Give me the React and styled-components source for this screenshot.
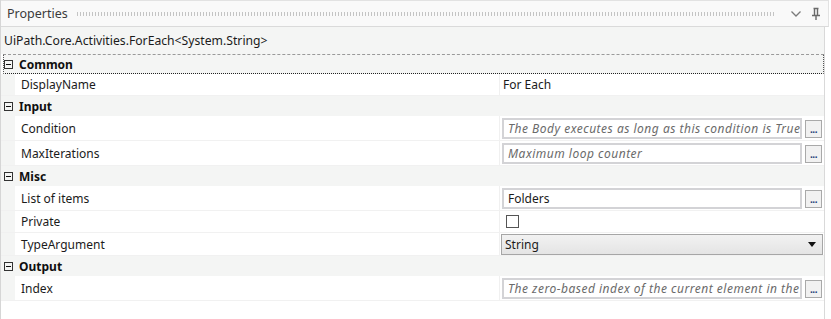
import React from 'react';
import styled, { createGlobalStyle } from 'styled-components';

const GlobalStyle = createGlobalStyle`
  html, body { margin: 0; padding: 0; background: #ffffff; }
  body { font-family: "Noto Sans", "Segoe UI", sans-serif; font-size: 12px; color: #1b1b1b; }
`;

const Panel = styled.div`
  width: 831px;
  height: 319px;
  display: flex;
  flex-direction: column;
  background: #ffffff;
  box-sizing: border-box;
  border-left: 1px solid #d6d6d6;
  overflow: hidden;
`;

const TitleBar = styled.div`
  height: 27px;
  display: flex;
  align-items: center;
  padding: 0 6px;
  gap: 8px;
  background: #f9f9f9;
  border-top: 1px solid #e2e2e2;
  border-bottom: 1px solid #dadada;
  border-right: 1px solid #e2e2e2;
  margin-right: 2px;
  box-sizing: border-box;
`;

const Title = styled.span`
  color: #3b3b3b;
  font-size: 12.5px;
`;

const Grip = styled.div`
  flex: 1;
  height: 4px;
  margin-right: 8px;
  background-image: radial-gradient(circle, #c4c4c4 0.7px, transparent 0.8px);
  background-size: 3px 2px;
`;

const TitleIcon = styled.svg`
  flex: none;
  display: block;
`;

const Body = styled.div`
  flex: 1;
  display: flex;
  flex-direction: column;
  margin-right: 6px;
  border-right: 1px solid #d9d9d9;
  background: #ffffff;
`;

const TypeName = styled.div`
  height: 27px;
  display: flex;
  align-items: center;
  padding-left: 3px;
  background: #f4f5f4;
  color: #1b1b1b;
  font-size: 12.2px;
`;

const CategoryRow = styled.div`
  height: 20px;
  display: flex;
  align-items: center;
  gap: 6px;
  padding-left: 3px;
  background: #f4f5f4;
  box-sizing: border-box;
  ${p => p.$focused && `
    border-top: 1px dashed #9a9a9a;
    border-bottom: 1px dotted #222;
    border-left: 1px dotted #555;
    border-right: 1px dotted #555;
    margin-left: 2px;
    padding-left: 0;
  `}
`;

const Toggle = styled.span`
  width: 9px;
  height: 9px;
  border: 1px solid #333;
  box-sizing: border-box;
  position: relative;
  flex: none;
  &::after {
    content: '';
    position: absolute;
    left: 1px;
    right: 1px;
    top: 3px;
    height: 1px;
    background: #111;
  }
`;

const CategoryName = styled.span`
  font-weight: 700;
  color: #0f0f0f;
`;

const PropRow = styled.div`
  height: ${p => p.$h}px;
  display: grid;
  grid-template-columns: 14px 485px minmax(0, 1fr);
  box-sizing: border-box;
  background: #ffffff;
  border-bottom: 1px solid #f1f1f1;
`;

const Gutter = styled.div`
  background: #f4f5f4;
`;

const Label = styled.div`
  display: flex;
  align-items: center;
  padding-left: 6px;
  color: #1b1b1b;
  border-right: 1px solid #f0f0f0;
`;

const ValueCell = styled.div`
  display: flex;
  align-items: center;
  gap: 3px;
  padding-left: 2px;
  padding-right: 2px;
  min-width: 0;
`;

const PlainValue = styled.span`
  padding-left: 1px;
`;

const TextBox = styled.div`
  flex: 1;
  min-width: 0;
  height: 21px;
  box-sizing: border-box;
  border: 2px solid #d3d3d6;
  display: flex;
  align-items: center;
  padding-left: 4px;
  white-space: nowrap;
  overflow: hidden;
  color: ${p => (p.$hint ? '#6a6a6a' : '#1b1b1b')};
  font-style: ${p => (p.$hint ? 'italic' : 'normal')};
  letter-spacing: ${p => (p.$hint ? '0.5px' : '0')};
  background: #ffffff;
`;

const DotsButton = styled.div`
  flex: none;
  width: 17px;
  height: 18px;
  box-sizing: border-box;
  border: 1px solid #a9a9a9;
  background: #f1f1f1;
  display: flex;
  align-items: flex-end;
  justify-content: center;
  padding-bottom: 3px;
  font-size: 10px;
  font-weight: 700;
  line-height: 1;
  color: #1f3e7a;
  letter-spacing: -0.5px;
  margin-top: 2px;
`;

const CheckBox = styled.span`
  width: 13px;
  height: 13px;
  box-sizing: border-box;
  border: 1px solid #555;
  background: #fff;
  margin-left: 4px;
`;

const Select = styled.div`
  flex: 1;
  height: 21px;
  box-sizing: border-box;
  border: 1px solid #a6a6a6;
  background: linear-gradient(#f2f2f2, #e4e4e4);
  display: flex;
  align-items: center;
  justify-content: space-between;
  padding: 0 6px 0 3px;
  margin-left: -1px;
  margin-right: -1px;
`;

const Caret = styled.span`
  width: 0;
  height: 0;
  border-left: 4px solid transparent;
  border-right: 4px solid transparent;
  border-top: 5px solid #111;
`;

const categories = [
  {
    name: 'Common',
    focused: true,
    props: [{ label: 'DisplayName', kind: 'plain', value: 'For Each', h: 22 }],
  },
  {
    name: 'Input',
    props: [
      { label: 'Condition', kind: 'text', hint: true, value: 'The Body executes as long as this condition is True', h: 25 },
      { label: 'MaxIterations', kind: 'text', hint: true, value: 'Maximum loop counter', h: 25 },
    ],
  },
  {
    name: 'Misc',
    props: [
      { label: 'List of items', kind: 'text', value: 'Folders', h: 25 },
      { label: 'Private', kind: 'check', h: 22 },
      { label: 'TypeArgument', kind: 'select', value: 'String', h: 23 },
    ],
  },
  {
    name: 'Output',
    props: [
      { label: 'Index', kind: 'text', hint: true, value: 'The zero-based index of the current element in the collection', h: 25 },
    ],
  },
];

function Value({ prop }) {
  if (prop.kind === 'plain') return <PlainValue>{prop.value}</PlainValue>;
  if (prop.kind === 'check') return <CheckBox />;
  if (prop.kind === 'select')
    return (
      <Select>
        <span>{prop.value}</span>
        <Caret />
      </Select>
    );
  return (
    <>
      <TextBox $hint={prop.hint}>{prop.value}</TextBox>
      <DotsButton>...</DotsButton>
    </>
  );
}

export default function App() {
  return (
    <>
      <GlobalStyle />
      <Panel>
        <TitleBar>
          <Title>Properties</Title>
          <Grip />
          <TitleIcon width="12" height="8" viewBox="0 0 12 8">
            <path d="M1.5 1.5 L6 6 L10.5 1.5" fill="none" stroke="#7a7a7a" strokeWidth="1.3" />
          </TitleIcon>
          <TitleIcon width="12" height="14" viewBox="0 0 12 14">
            <path d="M3.5 1.5 H8.5 M4.5 1.5 V8 M7.5 1.5 V8 M2 8.5 H10 M6 8.5 V13" fill="none" stroke="#6a6a6a" strokeWidth="1.4" />
          </TitleIcon>
        </TitleBar>
        <Body>
          <TypeName>UiPath.Core.Activities.ForEach&lt;System.String&gt;</TypeName>
          {categories.map(cat => (
            <React.Fragment key={cat.name}>
              <CategoryRow $focused={cat.focused}>
                <Toggle />
                <CategoryName>{cat.name}</CategoryName>
              </CategoryRow>
              {cat.props.map(p => (
                <PropRow key={p.label} $h={p.h}>
                  <Gutter />
                  <Label>{p.label}</Label>
                  <ValueCell>
                    <Value prop={p} />
                  </ValueCell>
                </PropRow>
              ))}
            </React.Fragment>
          ))}
        </Body>
      </Panel>
    </>
  );
}
